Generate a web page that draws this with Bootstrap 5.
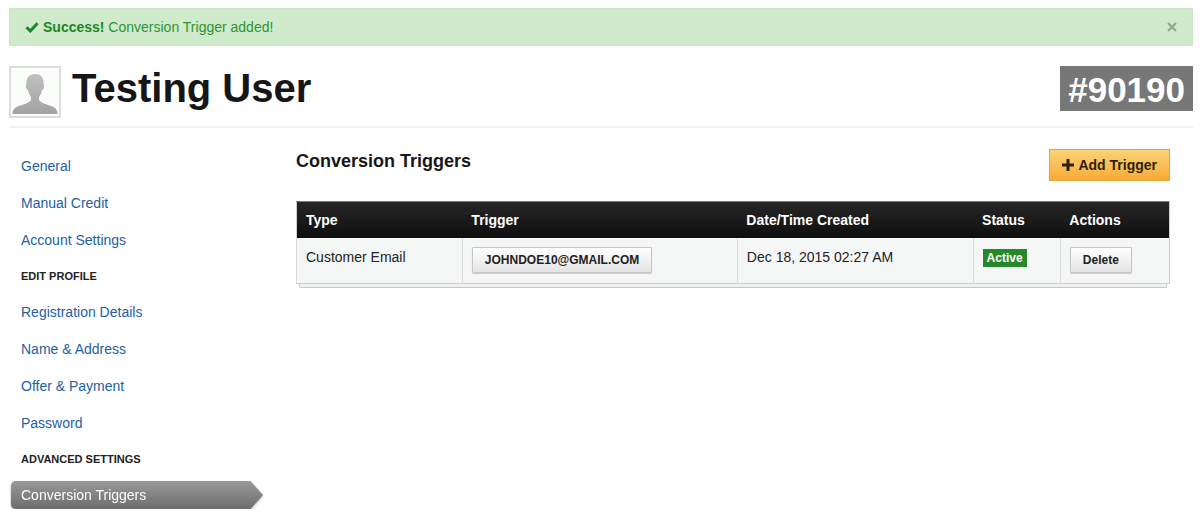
<!DOCTYPE html>
<html lang="en">
<head>
<meta charset="utf-8">
<meta name="viewport" content="width=device-width, initial-scale=1">
<title>Testing User - Conversion Triggers</title>
<link href="https://cdn.jsdelivr.net/npm/bootstrap@5.3.0/dist/css/bootstrap.min.css" rel="stylesheet">
<style>
  body { font-family: "Liberation Sans", Arial, sans-serif; font-size: 14px; line-height: 20px; color: #222; background: #fff; }
  .page { padding: 8px 7px 0 9px; }
  .notice { --bs-alert-padding-x: 15px; --bs-alert-padding-y: 8px; background: #d0ebcb; border: 1px solid #cbe8c6; color: #2b9534; min-height: 38px; margin-bottom: 20px; }
  .notice strong, .notice svg { color: #1f8426; }
  .notice .dismiss svg { color: #8fa98d; }
  .profile { height: 62px; border-bottom: 2px solid #f1f1f1; }
  .avatar { width: 52px; height: 52px; border: 2px solid #ddd; background: #fbfdfa; }
  .user-name { font-size: 40px; line-height: 44px; margin-left: 11px; color: #161616; }
  .user-id { font-size: 35px; line-height: 45px; padding: 1px 8px 0; height: 45px; background: #777; }
  .side { width: 287px; padding: 24px 33px 0 2px; }
  .side .nav-link { color: #2460a7; padding: 4px 10px; margin-bottom: 9px; line-height: 20px; font-size: 14px; }
  .side h2 { font-size: 11px; line-height: 20px; padding: 3px 10px 5px; margin: 0 0 7px; font-weight: bold; color: #222; }
  .side .nav-link.active { color: #fff; background: linear-gradient(#999, #6d6d6d); border-radius: 5px 0 0 5px; clip-path: polygon(0 0, 95% 0, 100% 50%, 95% 100%, 0 100%); margin-bottom: 0; }
  .arrow-shadow { filter: drop-shadow(0 1px 1px #aaa); }
  .main { padding: 21px 23px 0 0; }
  .main h3 { font-size: 18px; line-height: 24px; color: #161616; }
  .btn-trigger { font-size: 14px; line-height: 20px; padding: 5px 12px; border: 1px solid #dba544; border-radius: 0; background: linear-gradient(#fcd278, #f9ab35); color: #2d1f09; }
  .btn-plain { font-size: 12px; line-height: 16px; padding: 4px 12px; border: 1px solid #c6c6c6; border-radius: 1px; background: linear-gradient(#fff, #e4e4e4); color: #222; box-shadow: 0 1px 1px #ccc; }
  .triggers { --bs-table-bg: transparent; table-layout: fixed; color: #222; border: 1px solid #cfcfcf; border-top-color: #777; }
  .triggers thead { background: linear-gradient(#262626, #0e0e0e); }
  .triggers th { color: #fff; padding: 8px 9px; height: 36px; border: 0; }
  .triggers td { background: #f5f7f6; padding: 9px; height: 45px; border: 0; border-left: 1px solid #dcdcdc; }
  .stack-edge { height: 4px; margin: 0 3px; border: 1px solid #c8c8c8; border-top: 0; background: #f0f0f0; border-radius: 0 0 2px 2px; }
  .state { font-size: 12px; line-height: 14px; padding: 2px 4px; background: #25892a; border-radius: 0; }
  .c-type { width: 19%; } .c-trigger { width: 31.5%; } .c-date { width: 27%; } .c-status { width: 10%; }
</style>
</head>
<body>
<div class="page">
  <div class="alert notice d-flex align-items-center rounded-0" role="alert">
    <svg class="me-1" width="14" height="12" viewBox="0 0 13 12" aria-hidden="true"><path d="M1 6.3 4.8 10 12 2.3" fill="none" stroke="currentColor" stroke-width="3"/></svg>
    <span><strong>Success!</strong> Conversion Trigger added!</span>
    <button type="button" class="dismiss btn p-0 border-0 ms-auto d-flex" aria-label="Close"><svg width="10" height="10" viewBox="0 0 10 10"><path d="M1 1 9 9M9 1 1 9" fill="none" stroke="currentColor" stroke-width="2.2"/></svg></button>
  </div>

  <header class="profile d-flex align-items-start">
    <svg class="avatar flex-shrink-0" viewBox="0 0 48 48" role="img" aria-label="User picture">
      <defs><linearGradient id="person" x1="0" y1="0" x2="0" y2="1"><stop stop-color="#c0c0c0"/><stop offset="1" stop-color="#a2a2a2"/></linearGradient></defs>
      <path fill="url(#person)" d="M24 6c-6 0-9 4-8.500 10-1 0-1 5 1.500 6 .5 3 1.500 5 3 7v3c-2 3-7 4-12 6-4 1.500-6 3-6.500 7v1h45v-1c-.5-4-2.500-5.500-6.500-7-5-2-10-3-12-6v-3c1.500-2 2.500-4 3-7 2.500-1 2.500-6 1.500-6C33 10 30 6 24 6z"/>
    </svg>
    <h1 class="user-name fw-bold mb-0">Testing User</h1>
    <span class="user-id text-white fw-bold ms-auto">#90190</span>
  </header>

  <div class="d-flex align-items-start">
    <nav class="side nav flex-column flex-nowrap flex-shrink-0" aria-label="User settings">
      <a class="nav-link" href="#">General</a>
      <a class="nav-link" href="#">Manual Credit</a>
      <a class="nav-link" href="#">Account Settings</a>
      <h2>EDIT PROFILE</h2>
      <a class="nav-link" href="#">Registration Details</a>
      <a class="nav-link" href="#">Name &amp; Address</a>
      <a class="nav-link" href="#">Offer &amp; Payment</a>
      <a class="nav-link" href="#">Password</a>
      <h2>ADVANCED SETTINGS</h2>
      <div class="arrow-shadow"><a class="nav-link active" href="#" aria-current="page">Conversion Triggers</a></div>
    </nav>

    <main class="main flex-grow-1">
      <div class="d-flex align-items-start justify-content-between mb-3 pb-1">
        <h3 class="fw-bold mb-0">Conversion Triggers</h3>
        <button type="button" class="btn btn-trigger fw-bold d-flex align-items-center"><svg class="me-1" width="12" height="12" viewBox="0 0 12 12" aria-hidden="true"><path d="M6 0v12M0 6h12" stroke="currentColor" stroke-width="3"/></svg>Add Trigger</button>
      </div>
      <table class="table triggers mb-0">
        <colgroup><col class="c-type"><col class="c-trigger"><col class="c-date"><col class="c-status"><col></colgroup>
        <thead><tr><th>Type</th><th>Trigger</th><th>Date/Time Created</th><th>Status</th><th>Actions</th></tr></thead>
        <tbody><tr>
          <td>Customer Email</td>
          <td><button type="button" class="btn btn-plain fw-bold">JOHNDOE10@GMAIL.COM</button></td>
          <td>Dec 18, 2015 02:27 AM</td>
          <td><span class="badge state">Active</span></td>
          <td><button type="button" class="btn btn-plain fw-bold">Delete</button></td>
        </tr></tbody>
      </table>
      <div class="stack-edge"></div>
    </main>
  </div>
</div>
<script src="https://cdn.jsdelivr.net/npm/bootstrap@5.3.0/dist/js/bootstrap.bundle.min.js"></script>
</body>
</html>
